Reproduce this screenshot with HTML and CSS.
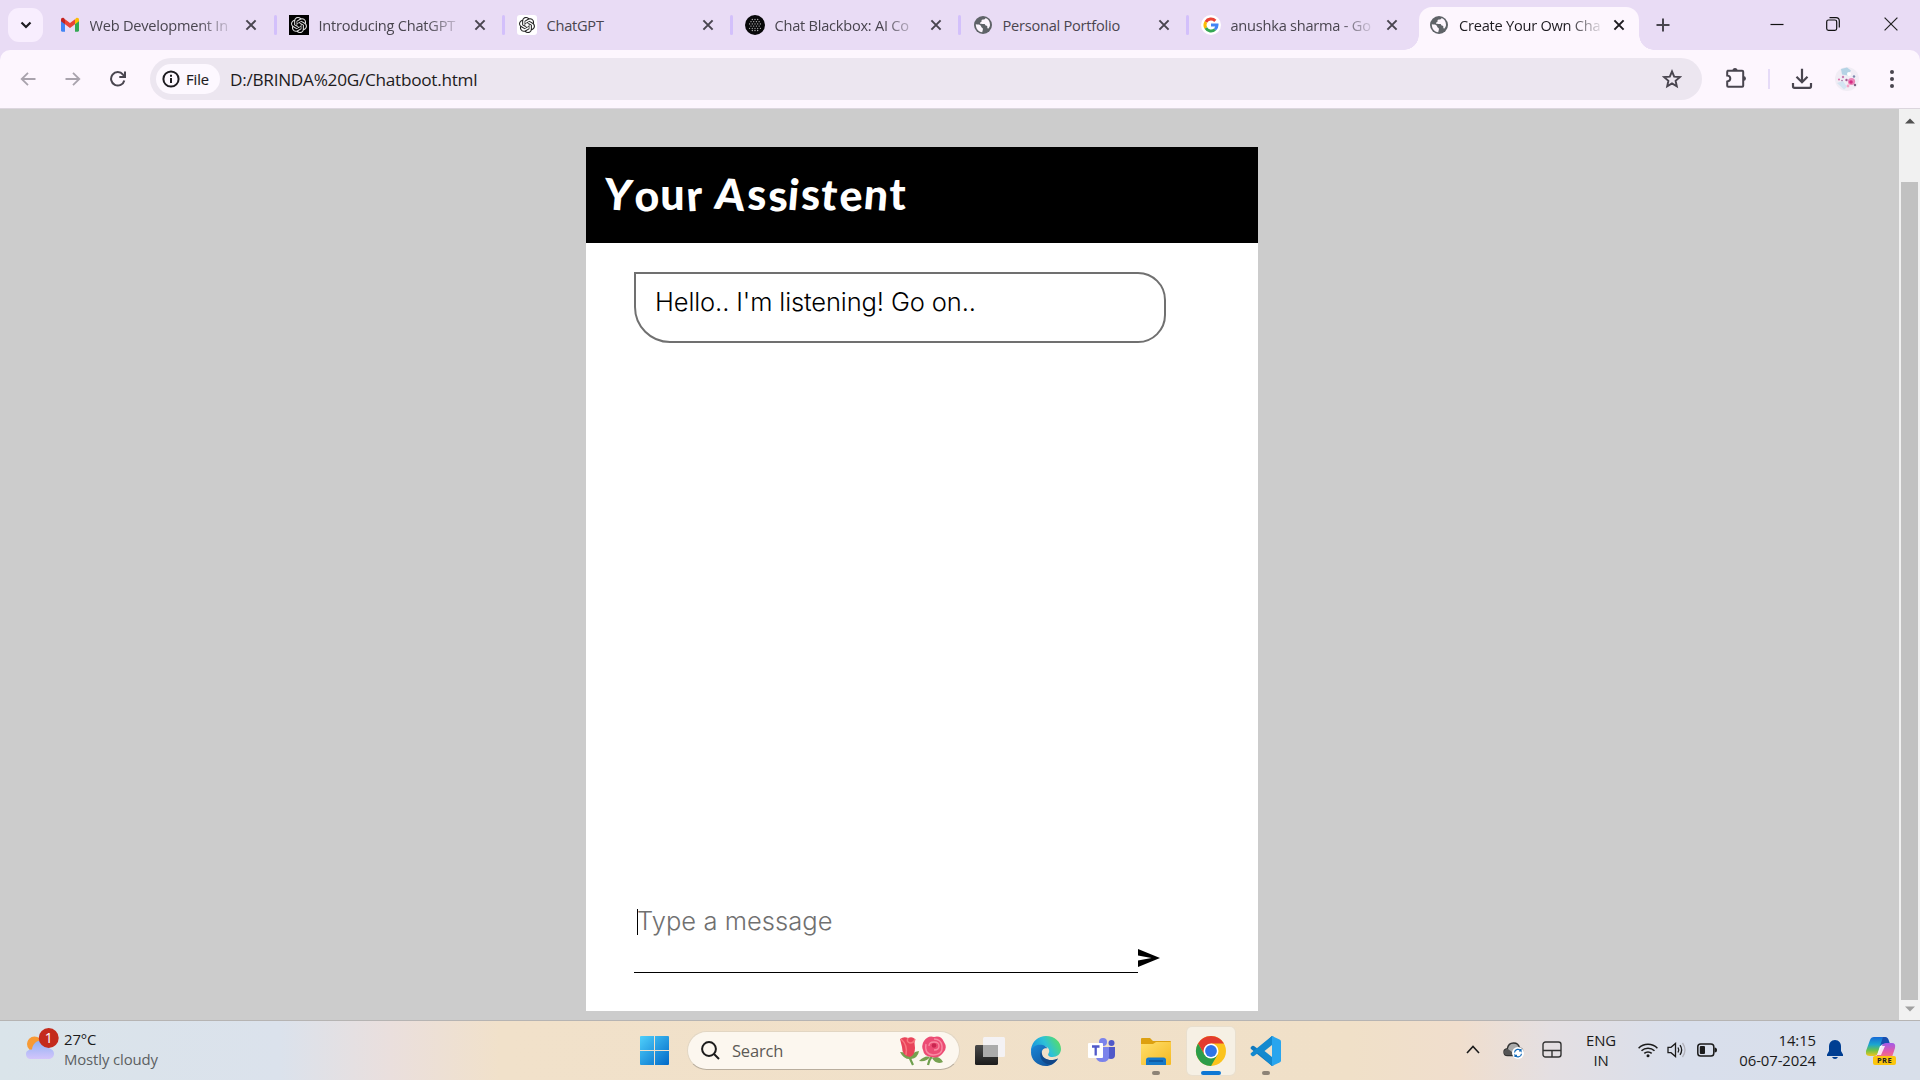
FILE: index.html
```html
<!DOCTYPE html>
<html lang="en">
<head>
<meta charset="utf-8">
<title>Create Your Own Chatbot</title>
<link rel="stylesheet" href="styles.css">
</head>
<body>
<svg width="0" height="0" class="defs">
  <defs>
    <symbol id="x" viewBox="0 0 12 12"><path d="M1.4 1.4l9.2 9.2M10.6 1.4l-9.2 9.2" fill="none" stroke="currentColor" stroke-width="2"/></symbol>
    <symbol id="globe" viewBox="0 0 20 20"><circle cx="10" cy="10" r="9" fill="#5f6368"/><path d="M2.8 9.3c2.1.2 4.3.2 5 1.5.6 1 .4 1.8 1.6 2.2 1 .4.4 2.2-.2 4.3C5.5 17 2.700 13.700 2.800 9.300zM12.600 2.900c-.3 1.300-1.400 1.700-2.800 1.700-1.200 0-1.300 1-1.300 1.900 0 .8-1.500.6-1.500 1.600 0 .7.800.800 2.100.800h2.300c.9 0 .7 1.900 2 1.900.9 0 1 .6.9 1.500-.1.800.300 1.300 1.200 1.300.6-1 1.500-2.300 1.500-3.900 0-3.200-1.700-5.700-4.400-6.800z" fill="#fdf6fe"/></symbol>
    <symbol id="knot" viewBox="0 0 24 24"><path fill="currentColor" d="M22.2819 9.8211a5.9847 5.9847 0 0 0-.5157-4.9108 6.0462 6.0462 0 0 0-6.5098-2.9A6.0651 6.0651 0 0 0 4.9807 4.1818a5.9847 5.9847 0 0 0-3.9977 2.9 6.0462 6.0462 0 0 0 .7427 7.0966 5.98 5.98 0 0 0 .511 4.9107 6.051 6.051 0 0 0 6.5146 2.9001A5.9847 5.9847 0 0 0 13.2599 24a6.0557 6.0557 0 0 0 5.7718-4.2058 5.9894 5.9894 0 0 0 3.9977-2.9001 6.0557 6.0557 0 0 0-.7475-7.0729zm-9.022 12.6081a4.4755 4.4755 0 0 1-2.8764-1.0408l.1419-.0804 4.7783-2.7582a.7948.7948 0 0 0 .3927-.6813v-6.7369l2.02 1.1686a.071.071 0 0 1 .038.052v5.5826a4.504 4.504 0 0 1-4.4945 4.4944zm-9.6607-4.1254a4.4708 4.4708 0 0 1-.5346-3.0137l.142.0852 4.783 2.7582a.7712.7712 0 0 0 .7806 0l5.8428-3.3685v2.3324a.0804.0804 0 0 1-.0332.0615L9.74 19.9502a4.4992 4.4992 0 0 1-6.1408-1.6464zM2.3408 7.8956a4.485 4.485 0 0 1 2.3655-1.9728V11.6a.7664.7664 0 0 0 .3879.6765l5.8144 3.3543-2.0201 1.1685a.0757.0757 0 0 1-.071 0l-4.8303-2.7865A4.504 4.504 0 0 1 2.3408 7.872zm16.5963 3.8558L13.1038 8.364 15.1192 7.2a.0757.0757 0 0 1 .071 0l4.8303 2.7913a4.4944 4.4944 0 0 1-.6765 8.1042v-5.6772a.79.79 0 0 0-.407-.667zm2.0107-3.0231l-.142-.0852-4.7735-2.7818a.7759.7759 0 0 0-.7854 0L9.409 9.2297V6.8974a.0662.0662 0 0 1 .0284-.0615l4.8303-2.7866a4.4992 4.4992 0 0 1 6.6802 4.66zM8.3065 12.863l-2.02-1.1638a.0804.0804 0 0 1-.038-.0567V6.0742a4.4992 4.4992 0 0 1 7.3757-3.4537l-.142.0805L8.704 5.459a.7948.7948 0 0 0-.3927.6813zm1.0976-2.3654l2.602-1.4998 2.6069 1.4998v2.9994l-2.5974 1.4997-2.6067-1.4997Z"/></symbol>
    <linearGradient id="win" x1="0" y1="0" x2="1" y2="1"><stop offset="0" stop-color="#4fd0fb"/><stop offset="1" stop-color="#0069c8"/></linearGradient>
    <linearGradient id="edgeA" x1="0" y1="0.600" x2="1" y2="0.200"><stop offset="0" stop-color="#1790dc"/><stop offset=".5" stop-color="#2dc1d8"/><stop offset="1" stop-color="#5be05a"/></linearGradient>
    <linearGradient id="edgeB" x1="0" y1="0" x2="1" y2="1"><stop offset="0" stop-color="#1b88d8"/><stop offset="1" stop-color="#114a91"/></linearGradient>
    <linearGradient id="fold" x1="0" y1="0" x2="1" y2="1"><stop offset="0" stop-color="#ffdf6b"/><stop offset="1" stop-color="#f5b922"/></linearGradient>
    <linearGradient id="cloud" x1="0" y1="0" x2="0" y2="1"><stop offset="0" stop-color="#8fb2f4"/><stop offset="1" stop-color="#d3c5fb"/></linearGradient>
    <linearGradient id="dark" x1="0" y1="0" x2="0" y2="1"><stop offset="0" stop-color="#4a4a4a"/><stop offset="1" stop-color="#1c1c1c"/></linearGradient>
    <linearGradient id="copA" x1="0" y1="0" x2="0" y2="1"><stop offset="0" stop-color="#1668d6"/><stop offset=".4" stop-color="#1ba6d0"/><stop offset=".7" stop-color="#6bc24a"/><stop offset="1" stop-color="#f3c51b"/></linearGradient>
    <linearGradient id="copB" x1="0" y1="0" x2="0" y2="1"><stop offset="0" stop-color="#a15be8"/><stop offset=".5" stop-color="#e75aa6"/><stop offset="1" stop-color="#fb8f55"/></linearGradient>
  </defs>
</svg>
<div class="screen">
  <header class="tabstrip">
    <div class="tab-search"><svg width="12" height="8" viewBox="0 0 12 8"><path d="M1.500 1.500L6 6l4.500-4.500" fill="none" stroke="#1d1b20" stroke-width="2.200"/></svg></div>
    <div class="tabs">
      <div class="tab first">
        <svg class="fav" viewBox="0 0 20 20"><path d="M1 4.500v11c0 .7.500 1.200 1.200 1.200H5V8.800z" fill="#4285f4"/><path d="M19 4.500v11c0 .7-.5 1.200-1.200 1.200H15V8.800z" fill="#34a853"/><path d="M15 4.300v4.900l4-3v-1.500c0-1.600-1.700-2.400-3-1.400z" fill="#fbbc04"/><path d="M5 9.200V4.300l5 3.700 5-3.700v4.900l-5 3.700z" fill="#ea4335"/><path d="M1 4.700v1.500l4 3V4.300L4 3.300C2.700 2.300 1 3.100 1 4.700z" fill="#c5221f"/></svg>
        <span class="title fade">Web Development In</span><svg class="close"><use href="#x"/></svg>
      </div>
      <div class="tab sep">
        <span class="fav tile-dark"><svg width="16" height="16"><use href="#knot"/></svg></span>
        <span class="title fade">Introducing ChatGPT</span><svg class="close"><use href="#x"/></svg>
      </div>
      <div class="tab sep">
        <span class="fav tile-light"><svg width="16" height="16"><use href="#knot"/></svg></span>
        <span class="title">ChatGPT</span><svg class="close"><use href="#x"/></svg>
      </div>
      <div class="tab sep">
        <svg class="fav" viewBox="0 0 20 20"><circle cx="10" cy="10" r="10" fill="#08080a"/><g stroke="#bbb" stroke-width="1.300" stroke-linecap="round" stroke-dasharray="0 2.700"><path d="M7.300 4.500h6M6 6.700h9M4.600 8.900h11M6 11.100h9M4.600 13.300h11M7.300 15.500h6"/></g></svg>
        <span class="title fade">Chat Blackbox: AI Co</span><svg class="close"><use href="#x"/></svg>
      </div>
      <div class="tab sep">
        <svg class="fav"><use href="#globe"/></svg>
        <span class="title">Personal Portfolio</span><svg class="close"><use href="#x"/></svg>
      </div>
      <div class="tab sep">
        <svg class="fav" viewBox="0 0 20 20"><circle cx="10" cy="10" r="10" fill="#fff"/><g fill="none" stroke-width="3"><path d="M14.300 5.900A6 6 0 0 0 4.800 7" stroke="#ea4335"/><path d="M4.800 7a6 6 0 0 0 0 6" stroke="#fbbc05"/><path d="M4.800 13a6 6 0 0 0 9.200 1.500" stroke="#34a853"/><path d="M14 14.500A6 6 0 0 0 16 10H10" stroke="#4285f4"/></g></svg>
        <span class="title fade">anushka sharma - Go</span><svg class="close"><use href="#x"/></svg>
      </div>
      <div class="tab active">
        <svg class="fav"><use href="#globe"/></svg>
        <span class="title fade">Create Your Own Cha</span><svg class="close"><use href="#x"/></svg>
      </div>
    </div>
    <svg class="newtab" viewBox="0 0 14 14"><path d="M7 .5v13M.5 7h13" stroke="#49454f" stroke-width="2"/></svg>
    <div class="winctl">
      <svg width="14" height="14" viewBox="0 0 14 14"><path d="M.5 7.500h13" stroke="#111" stroke-width="1.200"/></svg>
      <svg width="14" height="14" viewBox="0 0 14 14" fill="none" stroke="#111" stroke-width="1.200"><rect x=".7" y="3" width="10" height="10.300" rx="1.800"/><path d="M3.500.7H10a3.300 3.300 0 0 1 3.300 3.300v6.500"/></svg>
      <svg width="14" height="14" viewBox="0 0 14 14"><path d="M.6.600l12.800 12.800M13.400.600L.6 13.400" stroke="#222" stroke-width="1.200"/></svg>
    </div>
  </header>

  <nav class="toolbar">
    <div class="navbtns">
      <svg width="16" height="14" viewBox="0 0 16 14" fill="none" stroke="#a9a3ad" stroke-width="1.800"><path d="M15.500 7H1.500M8 .8L1.700 7 8 13.200"/></svg>
      <svg width="16" height="14" viewBox="0 0 16 14" fill="none" stroke="#a9a3ad" stroke-width="1.800"><path d="M.5 7h14M8 .8L14.300 7 8 13.200"/></svg>
      <svg width="16" height="16" viewBox="0 0 16 16" fill="none" stroke="#49454f" stroke-width="2"><path d="M14.300 9.400A6.700 6.700 0 1 1 13 3.600L14.500 5.300"/><path d="M15 .4V6H9.300"/></svg>
    </div>
    <div class="omnibox">
      <div class="chip"><svg width="18" height="18" viewBox="0 0 18 18" fill="none" stroke="#1d1b20" stroke-width="2"><circle cx="9" cy="9" r="7.600"/><path d="M9 8v5M9 4.800v2"/></svg><span>File</span></div>
      <span class="url">D:/BRINDA%20G/Chatboot.html</span>
      <svg class="star" viewBox="0 0 20 20"><path d="M10 2.500l2.200 5.100 5.600.500-4.200 3.700 1.200 5.500-4.800-2.900-4.800 2.900 1.200-5.500L2.200 8.100l5.600-.5z" fill="none" stroke="#49454f" stroke-width="1.900"/></svg>
    </div>
    <svg class="puzzle" viewBox="0 0 22 22"><path d="M2.200 3.800h15a1 1 0 0 1 1 1v14a1 1 0 0 1-1 1h-14a1 1 0 0 1-1-1v-4.300c1.900-.3 3.100-1.400 3.100-3s-1.200-2.800-3.100-3V4.800a1 1 0 0 1 1-1" fill="none" stroke="#49454f" stroke-width="2"/><path d="M7.500 3.500a2.500 2.500 0 0 1 5 0zM18.500 9a2.500 2.500 0 0 1 0 5z" fill="#49454f"/></svg>
    <i class="bar"></i>
    <svg class="download" viewBox="0 0 22 22" fill="none" stroke="#49454f" stroke-width="2.200"><path d="M11 .800v13M5.500 8.700l5.500 5.500 5.500-5.500M2 15v3.300c0 1 .5 1.500 1.500 1.500h15c1 0 1.500-.5 1.500-1.500V15"/></svg>
    <svg class="avatar" viewBox="0 0 24 24"><circle cx="12" cy="12" r="12" fill="#f1edf5"/><path d="M6 2l6-1.500 4 3-3 5-6-1z" fill="#b5d3e5"/><path d="M2 16l6-2 4 6-3 2.500z" fill="#d3e4f2"/><circle cx="16.500" cy="14.500" r="3.600" fill="#ec86b9"/><circle cx="16" cy="15" r="1.800" fill="#d62c85"/><circle cx="8" cy="10" r="1.200" fill="#c982b4"/><circle cx="11.500" cy="13" r="1.200" fill="#a45a92"/><circle cx="19" cy="9.500" r="1.200" fill="#7d88ad"/><circle cx="20" cy="18" r="1.200" fill="#7f6084"/><circle cx="4" cy="12.500" r=".9" fill="#d95ca0"/><circle cx="7" cy="13.500" r=".7" fill="#8f4f8c"/><circle cx="13" cy="19" r="1.400" fill="#f4a3c8"/><circle cx="14" cy="7" r="2" fill="#fff"/></svg>
    <svg class="dots" viewBox="0 0 4 18"><circle cx="2" cy="2" r="2"/><circle cx="2" cy="9" r="2"/><circle cx="2" cy="16" r="2"/></svg>
  </nav>

  <div class="viewport">
    <main class="page">
      <section class="chat">
        <h1 class="heading"><span class="a">Y</span><span class="b">o</span><span>u</span><span class="b">r</span> <span class="a">A</span><span>s</span><span class="b">s</span><span class="a">i</span><span>s</span><span class="a">t</span><span class="b">e</span><span class="a">n</span><span>t</span></h1>
        <div class="messages"><p class="bubble">Hello.. I'm listening! Go on..</p></div>
        <div class="composer">
          <div class="input"><i class="caret"></i><span class="placeholder">Type a message</span></div>
          <svg class="send" viewBox="0 0 22 18"><path d="M0 0l22 9L0 18v-6.500L13.500 9 0 6.500z"/></svg>
        </div>
      </section>
    </main>
    <aside class="scroll">
      <svg width="10" height="6" viewBox="0 0 10 6"><path d="M0 5.500L5 .5l5 5z" fill="#505050"/></svg>
      <i class="thumb"></i>
      <svg width="10" height="6" viewBox="0 0 10 6"><path d="M0 .5l5 5 5-5z" fill="#a0a0a0"/></svg>
    </aside>
  </div>

  <footer class="taskbar">
    <div class="weather">
      <svg width="34" height="34" viewBox="0 0 34 34"><circle cx="9.500" cy="16" r="7.500" fill="#f79a35"/><path d="M7 21.500c.5-5 4-9 9-9s8 3.500 8.500 8c2.500.500 4.500 2.500 4.500 5 0 4-3 5.500-5.500 5.500H6c-3 0-5-2-5-5s3-4.700 6-4.500z" fill="url(#cloud)"/><circle cx="23.700" cy="10" r="10" fill="#c42b1c"/><text x="23.700" y="15" text-anchor="middle" class="count">1</text></svg>
      <div class="wtext"><b>27°C</b><span>Mostly cloudy</span></div>
    </div>
    <div class="apps">
      <svg class="start" viewBox="0 0 29 29"><path d="M1 0h13v14H0V1a1 1 0 0 1 1-1zM15 0h13a1 1 0 0 1 1 1v13H15zM0 15h14v14H1a1 1 0 0 1-1-1zM15 15h14v13a1 1 0 0 1-1 1H15z" fill="url(#win)"/></svg>
      <div class="search">
        <svg width="19" height="19" viewBox="0 0 19 19" fill="none" stroke="#1b1b1b" stroke-width="2"><circle cx="8" cy="8" r="6.900"/><path d="M13 13l5 5"/></svg>
        <span>Search</span>
        <svg class="roses" viewBox="0 0 48 30"><path d="M10 20q2 5 4 9M29 29q1-5 4-9" stroke="#6fa04e" stroke-width="2.200" fill="none"/><path d="M1 16q6 0 10 5 2-5 9-6-1 7-8 8-7 1-11-7zM20 25q6-6 11-4-3 5-11 4zM33 22q7-3 11 4-7 3-11-4z" fill="#76a150"/><path d="M1 3q4-3 8-1 4-2 7 1-1 4 0 9 0 7-5 9-8-1-8-10z" fill="#e9445a"/><path d="M2 3q7 6 5 16M9 2q-2 4 2 5 4 0 5-4" stroke="#f7777f" fill="none" stroke-width="1.500"/><path d="M25 5q4-6 10-4 7-2 10 5 4 6-1 11-5 6-11 4-8 0-9-7-2-5 1-9z" fill="#ec4c74"/><path d="M27 8q-2 10 7 11 10 0 9-9-1-7-8-7M30 10q0-4 5-4t5 4q0 4-5 4" stroke="#f88aa2" fill="none" stroke-width="1.400"/><circle cx="35" cy="9.500" r="2.300" fill="#c92650"/></svg>
      </div>
      <div class="app view"><svg viewBox="0 0 32 32"><rect x="2" y="10" width="23" height="20" rx="1.500" fill="url(#dark)"/><rect x="10" y="2" width="22" height="20" rx="1.500" fill="#f4f4fb" opacity=".85"/><path d="M10 10h15v12H10z" fill="#ababab"/></svg></div>
      <div class="app"><svg viewBox="0 0 32 32"><path d="M1 14C2.500 6 8.500 1 16 1c9 0 15 6 15 13 0 5-4 8-8.500 8-4 0-5-2-4-3.500 2-3 0-7-5-7.500C8 10.500 3 13 1 17z" fill="url(#edgeA)"/><path d="M1 17c1-6 6-8 10.500-7.200 3 .5 5 2 6 3.700-4-1-6.500 2-5.500 6 1.200 4.500 8 7.500 16 4-3 5-7.500 7.500-12 7.500C7 31 .8 24.500 1 17z" fill="url(#edgeB)"/><path d="M11 16c-3 8 4 14 10 13.500 3-1 5.500-3 7-6-8 3.500-15.500.5-16-4.500z" fill="#103f7e" opacity=".7"/></svg></div>
      <div class="app teams"><svg viewBox="0 0 32 32"><circle cx="16" cy="7" r="4" fill="#7b83eb"/><circle cx="24.500" cy="8" r="3" fill="#5059c9"/><path d="M19 12h9v8q0 4-4 4-4 0-5-3z" fill="#5059c9"/><path d="M9 12h13v9q0 6-6.500 6T9 21z" fill="#7b83eb"/><rect x="1" y="8" width="15" height="15" rx="1" fill="#fff"/><path d="M5 11.500h7.500M8.700 12v8.500" stroke="#5059c9" stroke-width="2.300"/></svg></div>
      <div class="app"><svg viewBox="0 0 32 32"><path d="M1 4q0-1 1-1h8l3 3h17q1 0 1 1v6H1z" fill="#dda010"/><path d="M1 9h12l3-2h15v22q0 1-1 1H2q-1 0-1-1z" fill="url(#fold)"/><path d="M6 30v-5q0-2.500 2.500-2.500h15q2.500 0 2.500 2.500v5z" fill="#1679c9"/><path d="M9 26h14" stroke="#0c559d" stroke-width="1.500"/></svg><i class="run"></i></div>
      <div class="app on"><svg viewBox="0 0 32 32"><circle cx="16" cy="16" r="15" fill="#fbc31c"/><path d="M3 8.500A15 15 0 0 1 29 8.500H16L9.500 19.700z" fill="#e33b2e"/><path d="M3 8.500A15 15 0 0 0 16 31l6.500-11.300L9.500 19.700z" fill="#2c9d49"/><circle cx="16" cy="16" r="7.500" fill="#fff"/><circle cx="16" cy="16" r="5.900" fill="#2f74e8"/></svg><i class="run"></i></div>
      <div class="app"><svg viewBox="0 0 32 32"><path d="M22 1L8 14 4 11q-1-.7-2 0l-1 1q-.8 1 0 2l21 17 2-1V8z" fill="#1279bd"/><path d="M22 31L8 18l-4 3q-1 .7-2 0l-1-1q-.8-1 0-2L22 1l2 1v22z" fill="#1389cf"/><path d="M22 1l7.500 3.400q1.500.7 1.500 2v19.200q0 1.300-1.500 2L22 31z" fill="#29a5ee"/><path d="M22 10v12l-7.500-6z" fill="#f0e0c8"/></svg><i class="run"></i></div>
    </div>
    <div class="tray">
      <svg class="chev" viewBox="0 0 14 9"><path d="M1 8l6-6.500L13 8" fill="none" stroke="#1b1b1b" stroke-width="1.600"/></svg>
      <svg class="drive" viewBox="0 0 21 18"><path d="M4.500 14.500C2 14.500 1 12.500 1 11s1.300-3 3.300-3.200C5 4 7.500 2 10.500 2c3.200 0 5.500 2 6 5 2 .3 3.200 1.800 3.200 3.500 0 2.500-1.500 4-4 4z" fill="#aaa" stroke="#333" stroke-width="1.400"/><path d="M1 11c0-2 2-3 4-3l8 6H4.500C2 14.500 1 12.500 1 11z" fill="#555"/><circle cx="15" cy="12" r="6" fill="#fff"/><path d="M11.500 11.500a3.600 3.600 0 0 1 6.500-1.700V8M18.500 12.700a3.600 3.600 0 0 1-6.500 1.700V16M18 10h-2M12 14.300h2" fill="none" stroke="#1068b8" stroke-width="1.200"/></svg>
      <svg class="pad" viewBox="0 0 20 17" fill="none" stroke="#333" stroke-width="1.400"><rect x="1" y="1" width="18" height="15" rx="2.500"/><path d="M1 9.500h18M10 9.500V16"/></svg>
      <div class="lang"><span>ENG</span><span>IN</span></div>
      <svg class="wifi" viewBox="0 0 20 16" fill="none" stroke="#1b1b1b" stroke-width="1.500"><path d="M.6 6.200a13.300 13.300 0 0 1 18.800 0M3.500 8.800a9.300 9.300 0 0 1 13 0M6.300 11.400a5.300 5.300 0 0 1 7.400 0"/><circle cx="10" cy="13.800" r="1.500" fill="#1b1b1b" stroke="none"/></svg>
      <svg class="vol" viewBox="0 0 20 16" fill="none" stroke="#1b1b1b" stroke-width="1.300"><path d="M1 5.300h3L8.500 1.500v13L4 10.700H1zM11 5.500q1.600 2.500 0 5"/><path d="M13 3.200q3.300 4.800 0 9.600"/><path d="M15.500 1q5 7 0 14" stroke="#b3b3bb"/></svg>
      <svg class="batt" viewBox="0 0 20 14"><rect x=".8" y="1" width="16" height="12" rx="2.800" fill="none" stroke="#1b1b1b" stroke-width="1.500"/><rect x="2.800" y="3" width="5.200" height="8" rx="1" fill="#1b1b1b"/><path d="M17.500 4.500q2.500 0 2.500 2.500t-2.500 2.500z" fill="#1b1b1b"/></svg>
      <div class="clock"><span>14:15</span><span>06-07-2024</span></div>
      <svg class="bell" viewBox="0 0 16 19"><path d="M8 0C4 0 2 3 2 6.500V11L0 14.500V16h16v-1.500L14 11V6.500C14 3 12 0 8 0zM5 17h6q-1 2-3 2t-3-2z" fill="#003e92"/></svg>
      <svg class="copilot" viewBox="0 0 30 29"><path d="M8 1h10q3 0 4 3l1 4h-5q-3 0-4 3l-2 6q-1 3-4 3H4q-5 0-4-5L4 4q1-3 4-3z" fill="url(#copA)"/><path d="M17 1h2q3 0 4 4l1 3h-6q-3 0-4 2z" fill="#174eae"/><path d="M20 7h6q4 0 3 5l-3 9q-1 4-5 4H10q-3 0-3-4 3 1 5-3l4-8q1-3 4-3z" fill="url(#copB)"/><path d="M14 10h5l-4 9h-4z" fill="#fff" opacity=".85"/><rect x="7" y="20" width="23" height="9" rx="2" fill="#fbc60e"/><text x="18.500" y="27.300" text-anchor="middle" class="pre">PRE</text></svg>
    </div>
  </footer>
</div>
</body>
</html>
```
FILE: styles.css
```css
* { box-sizing: border-box; }
body { margin: 0; font-family: "Open Sans", "Noto Sans", sans-serif; overflow: hidden; }
svg { display: block; flex: none; }
.defs { position: absolute; }
.screen { width: 1920px; height: 1080px; display: flex; flex-direction: column; background: #e9dcf5; }

.tabstrip { height: 50px; display: flex; flex: none; align-items: center; color: #49454f; }
.tab-search { width: 35px; height: 34px; margin-left: 8px; border-radius: 11px; background: #f8eefe; display: flex; align-items: center; justify-content: center; }
.tabs { display: flex; margin-left: 3px; height: 50px; }
.tab { width: 228px; display: flex; align-items: center; padding: 0 16.500px 0 14.500px; position: relative; }
.tab.first { padding: 0 17.500px 0 13.500px; }
.tab.sep::before { content: ""; position: absolute; left: 0; top: 15px; width: 3px; height: 20px; border-radius: 2px; background: #d3c0fb; }
.tab.active { margin-left: 5px; width: 220px; height: 43px; align-self: flex-end; background: #fdf6fe; border-radius: 13px 13px 0 0; padding: 0 14.500px 7px 10px; color: #1d1b20; }
.tab.active::before, .tab.active::after { content: ""; position: absolute; bottom: 0; width: 15px; height: 15px; }
.tab.active::before { left: -15px; background: radial-gradient(circle at 0 0, transparent 14.500px, #fdf6fe 15px); }
.tab.active::after { right: -15px; background: radial-gradient(circle at 100% 0, transparent 14.500px, #fdf6fe 15px); }
.fav { width: 20px; height: 20px; flex: none; display: flex; align-items: center; justify-content: center; }
.tile-dark { background: #000; color: #ddd; }
.tile-light { background: #fff; color: #222; border-radius: 3px; }
.title { flex: 1; margin: 0 8px 0 10px; font-size: 14.600px; letter-spacing: -.24px; line-height: 22px; white-space: nowrap; }
.fade { -webkit-mask-image: linear-gradient(90deg, #000 108px, transparent 146px); mask-image: linear-gradient(90deg, #000 108px, transparent 146px); }
.close { width: 12px; height: 12px; }
.newtab { width: 14px; height: 14px; margin-left: 17px; }
.winctl { margin-left: auto; display: flex; gap: 42px; padding: 0 22px 2px 0; }
.winctl svg:last-child { margin-left: 2px; }

.toolbar { height: 59px; flex: none; display: flex; align-items: center; background: #fdf6fe; border-bottom: 1px solid #dcd6de; border-radius: 10px 10px 0 0; }
.navbtns { width: 150px; display: flex; gap: 29px; padding-left: 20px; align-items: center; }
.omnibox { width: 1552px; height: 42px; border-radius: 21px; background: #ece6f0; display: flex; align-items: center; padding-left: 6px; }
.chip { width: 64px; height: 30px; border-radius: 15px; background: #fdf8ff; display: flex; align-items: center; padding-left: 6px; gap: 6px; font-size: 14.700px; color: #1d1b20; letter-spacing: -.05px; -webkit-text-stroke: .15px; }
.url { margin: 0 0 0 10px; font-size: 17.200px; letter-spacing: -.27px; color: #1d1b20; }
.star { width: 20px; height: 20px; margin: 0 20px 0 auto; }
.puzzle { width: 22px; height: 22px; margin: -2px 0 0 23px; }
.bar { width: 2px; height: 20px; background: #e6dbf8; margin-left: 21px; }
.download { width: 22px; height: 22px; margin-left: 21px; }
.avatar { width: 24px; height: 24px; margin-left: 22px; }
.dots { width: 4px; height: 18px; margin-left: 31px; fill: #49454f; }

.viewport { height: 911px; flex: none; display: flex; }
.page { flex: 1; background: #ccc; padding: 38px 0 0 586px; }
.chat { width: 672px; height: 864px; background: #fff; display: flex; flex-direction: column; }
.heading { margin: 0; height: 96px; background: #000; color: #fff; padding: 21px 0 0 18px; font: 900 43px/52px Lato, "Open Sans", sans-serif; letter-spacing: 1.500px; white-space: pre; }
.heading span { display: inline-block; }
.heading .a { transform: rotate(5deg); }
.heading .b { transform: rotate(-4deg) translateY(1px); }
.messages { flex: 1; padding: 29px 0 0 48px; }
.bubble { margin: 0; width: 532px; height: 71px; border: 2px solid #707070; border-radius: 0 28px 28px 36px; padding: 10px 19px; font: 300 25.500px/36px Inter, "Open Sans", sans-serif; letter-spacing: -.12px; color: #000; }
.composer { display: flex; align-items: flex-end; padding: 0 0 38px 48px; }
.input { width: 504px; height: 68px; border-bottom: 1px solid #000; display: flex; padding: 4px 0 0 3px; font: 350 25.500px/24px Inter, "Open Sans", sans-serif; color: #707070; }
.placeholder { margin-left: -1px; letter-spacing: .06px; }
.caret { width: 1px; height: 26px; background: #000; }
.send { width: 22px; height: 18px; margin-bottom: 6px; }
.scroll { width: 21px; background: #f1f1f1; display: flex; flex-direction: column; align-items: center; padding: 9px 0 8px; }
.thumb { width: 17px; height: 818px; margin: 58px 0 6px; background: #c1c1c1; }

.taskbar { height: 60px; flex: none; display: flex; border-top: 1px solid #b6b4b3; background: linear-gradient(90deg, #dae4ea 0, #dbe2ec 280px, #eadfdd 390px, #f1e1ca 500px, #f0e0c8 1350px, #f0decd 1460px, #e4dfe2 1550px, #d9dfec 1680px, #d8dfea 100%); }
.weather { width: 640px; display: flex; padding: 7px 0 0 25px; }
.wtext { display: flex; flex-direction: column; margin-left: 5px; font-size: 14.900px; line-height: 20px; letter-spacing: -.12px; color: #5c5f62; padding-top: 1px; }
.wtext b { font-weight: 400; color: #1b1b1b; }
.count { font: 14px "Open Sans", sans-serif; fill: #fff; }
.apps { width: 800px; display: flex; align-items: center; }
.start { width: 29px; height: 29px; }
.search { width: 273px; height: 39px; margin: 0 7px 0 18px; border-radius: 20px; background: #fcf7ef; border: 1px solid #e2d6c3; border-bottom-color: #b9ae9e; display: flex; align-items: center; padding: 0 12px 0 13px; font-size: 16.500px; letter-spacing: -.2px; color: #5d5a56; gap: 12px; }
.roses { width: 48px; height: 30px; margin-left: auto; }
.app { width: 48px; height: 48px; margin-right: 7px; flex: none; border-radius: 5px; display: grid; place-items: center; position: relative; }
.app svg { width: 32px; height: 32px; }
.app.view { padding-right: 4px; }
.app.teams { padding-left: 4px; }
.app.on { background: #f6f0e4; box-shadow: 0 0 0 1px #e9dfce; }
.run { position: absolute; bottom: 0; left: 20px; width: 8px; height: 4px; border-radius: 2px; background: #8d8376; }
.on .run { left: 14px; width: 20px; background: #0f78d4; }
.tray { flex: 1; display: flex; align-items: center; padding: 0 0 2px 26px; color: #1b1b1b; font-size: 14.900px; line-height: 20px; letter-spacing: -.1px; }
.chev { width: 14px; height: 9px; }
.drive { width: 21px; height: 18px; margin-left: 23px; }
.pad { width: 20px; height: 17px; margin-left: 18px; }
.lang { width: 40px; margin-left: 19px; display: flex; flex-direction: column; align-items: center; }
.wifi { width: 20px; height: 16px; margin-left: 17px; }
.vol { width: 20px; height: 16px; margin-left: 9px; }
.batt { width: 20px; height: 14px; margin-left: 10px; }
.clock { width: 99px; display: flex; flex-direction: column; align-items: flex-end; }
.bell { width: 16px; height: 19px; margin-left: 11px; }
.copilot { width: 30px; height: 29px; margin: 2px 0 0 23px; }
.pre { font: 700 7.500px "Open Sans", sans-serif; letter-spacing: .4px; fill: #222; }
```
